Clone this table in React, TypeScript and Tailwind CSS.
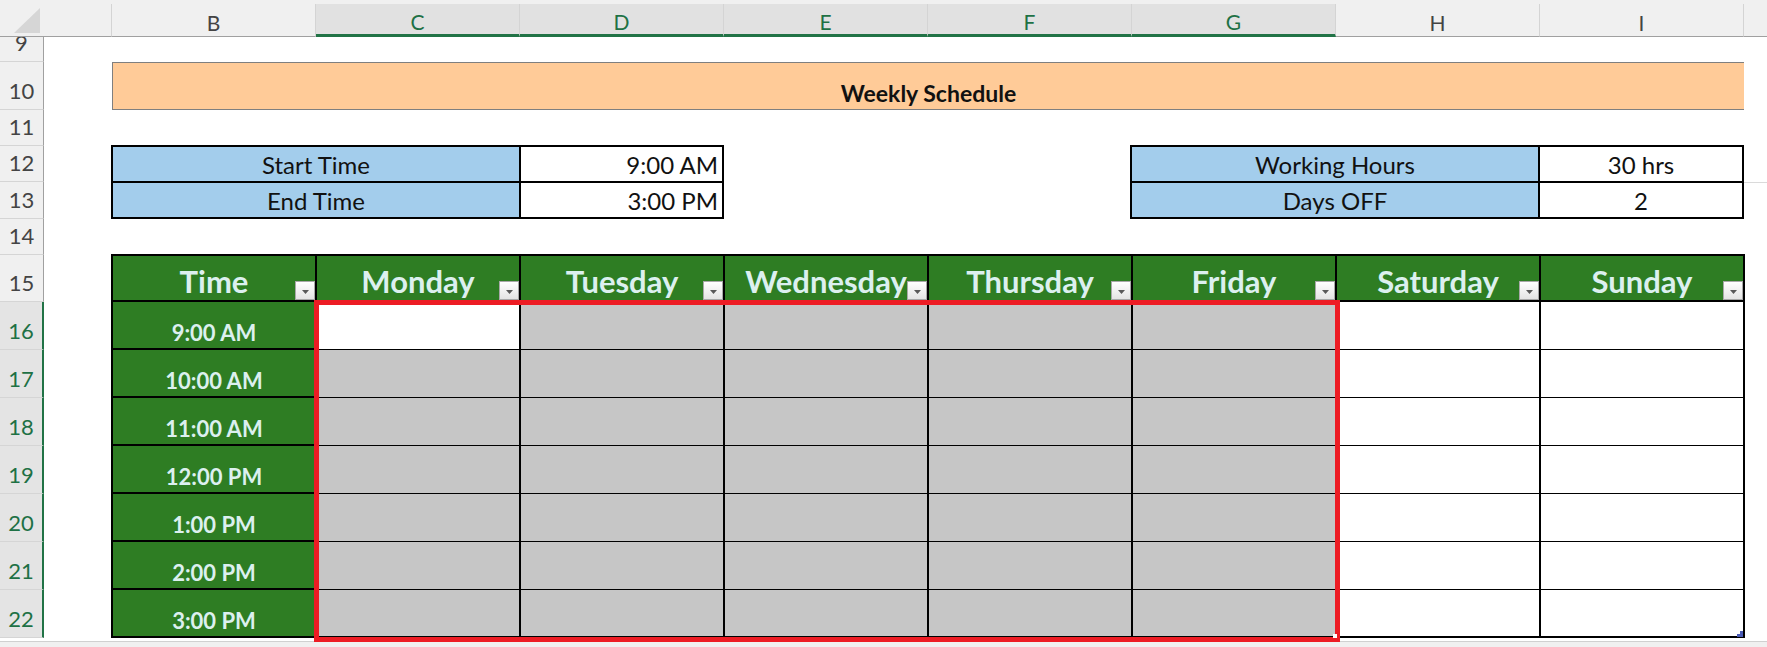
import React from "react";

const days = ["Monday", "Tuesday", "Wednesday", "Thursday", "Friday", "Saturday", "Sunday"];
const times = ["9:00 AM", "10:00 AM", "11:00 AM", "12:00 PM", "1:00 PM", "2:00 PM", "3:00 PM"];

// excel row header: [label, height, selected]
const rowHeads: [string, number, boolean][] = [
  ["9", 25, false],
  ["10", 48, false],
  ["11", 36, false],
  ["12", 36, false],
  ["13", 37, false],
  ["14", 36, false],
  ["15", 47, false],
  ["16", 48, true],
  ["17", 48, true],
  ["18", 48, true],
  ["19", 48, true],
  ["20", 48, true],
  ["21", 48, true],
  ["22", 48, true],
];

const colHeads: [string, boolean][] = [
  ["B", false],
  ["C", true],
  ["D", true],
  ["E", true],
  ["F", true],
  ["G", true],
  ["H", false],
  ["I", false],
];

function FilterButton() {
  return (
    <div className="absolute right-0 bottom-0 w-[20px] h-[19px] border border-[#a8a8a8] bg-linear-to-b from-white to-[#e4e4e4] flex items-center justify-center">
      <svg width="7" height="4" viewBox="0 0 7 4" className="mt-[3px]">
        <path d="M0 0 L7 0 L3.5 4 Z" fill="#595959" />
      </svg>
    </div>
  );
}

export default function App() {
  return (
    <div className="relative w-[1767px] h-[647px] overflow-hidden bg-white font-['Lato',sans-serif] text-[#111]">
      {/* column headers */}
      <div className="flex h-[37px] bg-[#f0f0f0] pt-[4px]">
        <div className="relative w-[44px] shrink-0 border-b border-[#a0a0a0]">
          <svg width="26" height="25" className="absolute left-[14px] top-[4px]">
            <polygon points="26,0 26,25 0,25" fill="#d6d6d6" />
          </svg>
        </div>
        <div className="w-[68px] shrink-0 border-r border-b border-[#a0a0a0] border-r-[#d4d4d4]" />
        {colHeads.map(([l, sel]) => (
          <div
            key={l}
            className={`w-[204px] shrink-0 flex items-center justify-center pt-[4px] text-[21px] leading-none border-r border-r-[#d4d4d4] ${
              sel ? "bg-[#e1e1e1] text-[#1e7145] border-b-[3px] border-b-[#217346]" : "text-[#444] border-b border-b-[#a0a0a0]"
            }`}
          >
            {l}
          </div>
        ))}
        <div className="flex-1 border-b border-[#a0a0a0]" />
      </div>

      <div className="flex">
        {/* row headers */}
        <div className="w-[44px] shrink-0 flex flex-col">
          {rowHeads.map(([l, h, sel]) => (
            <div
              key={l}
              style={{ height: h }}
              className={`flex items-end justify-center pb-[7px] text-[22px] leading-none border-b border-b-[#d5d5d5] ${
                sel
                  ? "bg-[#e4e4e4] text-[#1e7145] border-r-2 border-r-[#217346]"
                  : "bg-[#f0f0f0] text-[#444] border-r border-r-[#a0a0a0]"
              }`}
            >
              {l}
            </div>
          ))}
        </div>

        {/* sheet */}
        <div className="flex-1 flex flex-col">
          <div className="h-[25px]" />

          {/* title band */}
          <div className="ml-[68px] w-[1632px] h-[48px] bg-[#ffcb98] border-t border-b border-l border-[#7f7f7f] flex items-end justify-center pb-[4px]">
            <span className="font-bold text-[23px] leading-none">Weekly Schedule</span>
          </div>

          <div className="h-[35px]" />

          {/* info tables */}
          <div className="flex">
            <div className="ml-[67px] border-l-2 border-t-2 border-black">
              {[
                ["Start Time", "9:00 AM"],
                ["End Time", "3:00 PM"],
              ].map(([k, v]) => (
                <div key={k} className="flex h-[36px]">
                  <div className="w-[408px] bg-[#a3cdec] border-r-2 border-b-2 border-black flex items-end justify-center pb-[4px] text-[24px] leading-none">
                    {k}
                  </div>
                  <div className="w-[203px] bg-white border-r-2 border-b-2 border-black flex items-end justify-end pr-[4px] pb-[4px] text-[24px] leading-none">
                    {v}
                  </div>
                </div>
              ))}
            </div>
            <div className="ml-[406px] border-l-2 border-t-2 border-black">
              {[
                ["Working Hours", "30 hrs"],
                ["Days OFF", "2"],
              ].map(([k, v]) => (
                <div key={k} className="flex h-[36px]">
                  <div className="w-[408px] bg-[#a3cdec] border-r-2 border-b-2 border-black flex items-end justify-center pb-[4px] text-[24px] leading-none">
                    {k}
                  </div>
                  <div className="w-[204px] bg-white border-r-2 border-b-2 border-black flex items-end justify-center pb-[4px] text-[24px] leading-none">
                    {v}
                  </div>
                </div>
              ))}
            </div>
            <div className="flex-1 mt-[37px] h-px bg-[#dadada]" />
          </div>

          <div className="h-[35px]" />

          {/* schedule table */}
          <div className="ml-[67px] w-fit border-l-2 border-t-2 border-black">
            <div className="flex h-[46px]">
              {["Time", ...days].map((d) => (
                <div
                  key={d}
                  className="relative w-[204px] bg-[#2e7d23] border-r-2 border-b-2 border-black flex items-end justify-center pb-[3px] text-[31px] leading-none font-bold text-[#dcf0ef]"
                >
                  {d}
                  <FilterButton />
                </div>
              ))}
            </div>
            {times.map((t, r) => (
              <div key={t} className="flex h-[48px]">
                <div className="w-[204px] bg-[#2e7d23] border-r-2 border-b-2 border-black flex items-end justify-center pb-[4px] text-[22px] leading-none font-bold text-[#dcf0ef]">
                  {t}
                </div>
                {days.map((d, c) => {
                  const gray = c < 5 && !(r === 0 && c === 0);
                  return (
                    <div
                      key={d}
                      className={`w-[204px] border-r-2 border-black ${
                        r === times.length - 1 ? "border-b-2" : "border-b"
                      } ${gray ? "bg-[#c6c6c6]" : "bg-white"}`}
                    />
                  );
                })}
              </div>
            ))}
          </div>
        </div>
      </div>

      {/* bottom strip */}
      <div className="absolute left-0 right-0 bottom-0 h-[6px] bg-[#f0f0f0] border-t border-[#d0d0d0]" />

      {/* selection outline */}
      <div className="absolute left-[314px] top-[300px] w-[1026px] h-[342px] border-[5px] border-[#ed1c24]" />
      <div className="absolute left-[1333px] top-[634px] w-[4px] h-[4px] bg-white" />
      <div className="absolute left-[1737px] top-[631px] w-[6px] h-[6px] bg-[#4a5bb5] [clip-path:polygon(100%_0,100%_100%,0_100%,0_50%,50%_50%,50%_0)]" />
    </div>
  );
}
